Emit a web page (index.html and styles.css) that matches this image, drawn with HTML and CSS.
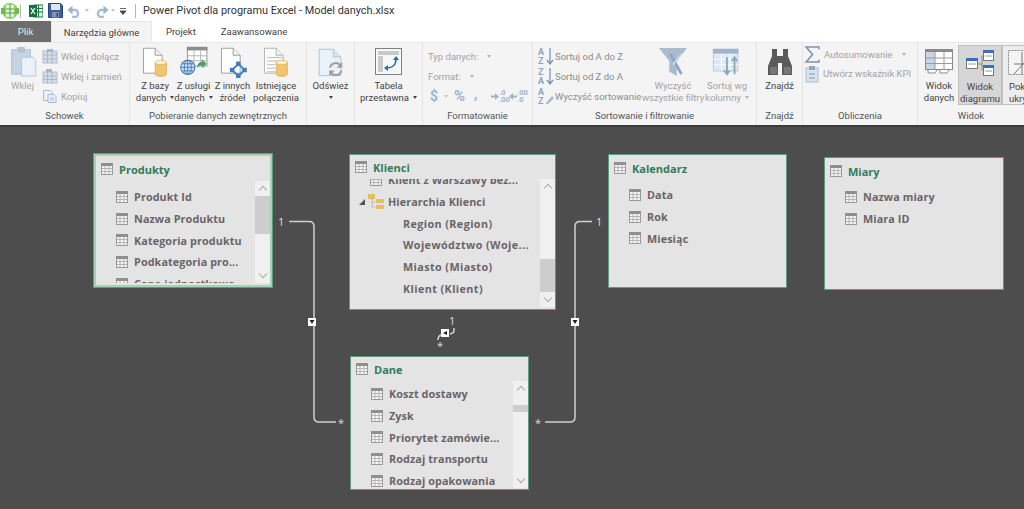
FILE: index.html
```html
<!DOCTYPE html>
<html lang="pl">
<head>
<meta charset="utf-8">
<title>Power Pivot dla programu Excel - Model danych.xlsx</title>
<link rel="stylesheet" href="styles.css">
</head>
<body>
<svg class="defs" width="0" height="0">
  <symbol id="tbl" viewBox="0 0 12 12">
    <rect x=".5" y=".5" width="11" height="11" fill="#f4f4f4" stroke="#9a9a9a"/>
    <rect x="0" y="0" width="12" height="3" fill="#8f8f8f"/>
    <path d="M4 3v8M8 3v8M1 5.5h10M1 8.5h10" stroke="#b4b4b4" fill="none"/>
  </symbol>
  <symbol id="page" viewBox="0 0 32 36">
    <path d="M3.5 1.5h15l9 9v23h-24z" fill="#fff" stroke="#8a8a8a"/>
    <path d="M18.5 1.5v9h9" fill="#f2f2f2" stroke="#8a8a8a"/>
  </symbol>
  <symbol id="cyl" viewBox="0 0 14 18">
    <path d="M1 3v12c0 3.5 12 3.500 12 0V3z" fill="#f1c46f" stroke="#d9a648" stroke-width=".6"/>
    <ellipse cx="7" cy="3" rx="6" ry="2.400" fill="#fbeecb" stroke="#d9a648" stroke-width=".6"/>
  </symbol>
  <symbol id="arr-r" viewBox="0 0 8 7"><path d="M0 2.500h4V0l4 3.500L4 7V4.500H0z" fill="#9fb4ca"/></symbol>
  <symbol id="arr-l" viewBox="0 0 8 7"><path d="M8 2.500H4V0L0 3.500 4 7V4.500h4z" fill="#9fb4ca"/></symbol>
</svg>

<header class="titlebar">
  <svg class="tb-logo" width="18" height="18" viewBox="0 0 18 18"><circle cx="9" cy="9" r="8" fill="#8ccf6c"/><rect x="5" y="3" width="8" height="12" fill="#e6f5da"/><path d="M5 7h8M5 11h8M9 3v12" stroke="#4f9e3d"/><rect x="0" y="6" width="4" height="6" fill="#6dbb4c"/><rect x="14" y="6" width="4" height="6" fill="#6dbb4c"/></svg>
  <span class="tb-sep"></span>
  <svg class="tb-excel" width="14" height="14" viewBox="0 0 14 14"><rect x="5" y="1" width="9" height="12" fill="#dfeee6" stroke="#1f7a45"/><path d="M5 4.500h9M5 8h9M9.500 1v12" stroke="#1f7a45"/><rect y="1" width="8" height="12" fill="#17703c"/><path d="M2 4l4 6M6 4l-4 6" stroke="#fff" stroke-width="1.200"/></svg>
  <svg class="tb-save" width="15" height="15" viewBox="0 0 15 15"><path d="M.5.5h12l2 2v12H.5z" fill="#3e5f9f" stroke="#2c4577"/><rect x="3" y="1" width="9" height="6" fill="#dfe6f2"/><rect x="4" y="9" width="7" height="5.500" fill="#8593ad"/><rect x="8.500" y="10" width="1.500" height="3.500" fill="#30476f"/></svg>
  <svg class="tb-undo" width="15" height="14" viewBox="0 0 15 14"><path d="M3 6h6a4 4 0 0 1 0 7H5" fill="none" stroke="#a9bdd6" stroke-width="2.500"/><path d="M5.500 1.500v9L.5 6z" fill="#9db3cf"/></svg>
  <span class="caret tb-c1"></span>
  <svg class="tb-redo" width="15" height="14" viewBox="0 0 15 14"><path d="M12 6H6a4 4 0 0 0 0 7h4" fill="none" stroke="#a9bdd6" stroke-width="2.500"/><path d="M9.500 1.500v9l5-4.500z" fill="#9db3cf"/></svg>
  <span class="caret tb-c2"></span>
  <svg class="tb-more" width="8" height="8" viewBox="0 0 8 8"><path d="M1 1.500h6M1 4h6L4 7.500z" fill="#444" stroke="#444" stroke-width=".8"/></svg>
  <span class="tb-sep tb-sep2"></span>
  <span class="tb-title">Power Pivot dla programu Excel - Model danych.xlsx</span>
</header>

<nav class="tabs">
  <span class="tab tab-file">Plik</span>
  <span class="tab tab-active">Narzędzia główne</span>
  <span class="tab tab-p">Projekt</span>
  <span class="tab tab-z">Zaawansowane</span>
</nav>

<section class="ribbon">
  <div class="group g-schowek">
    <div class="group-body">
      <div class="big dis w-wklej">
        <svg width="30" height="32" viewBox="0 0 30 34"><rect x="3" y="4" width="20" height="26" fill="#c5d3e2" stroke="#aebdd0"/><rect x="9" y="1" width="8" height="6" fill="#b4c2d3"/><path d="M13.500 12h12l3 3v17h-15z" fill="#eaf1f8" stroke="#b3c4d8"/></svg>
        <span>Wklej</span>
      </div>
      <div class="smalls">
        <div class="small dis"><svg width="16" height="16" viewBox="0 0 16 16"><rect x="1" y="3" width="14" height="12" fill="#d5dee8" stroke="#b3bfcd"/><path d="M1 7h14M1 11h14M5.500 3v12M10 3v12" stroke="#aab8c8"/><rect x="5" y="1" width="6" height="3" fill="#a9b7c7"/></svg>Wklej i dołącz</div>
        <div class="small dis"><svg width="16" height="16" viewBox="0 0 16 16"><rect x="1" y="4" width="14" height="11" fill="#d5dee8" stroke="#b3bfcd"/><path d="M1 8h14M1 11.500h14M5.500 4v11M10 4v11" stroke="#aab8c8"/><rect x="4" y="1" width="6" height="3" fill="#a9b7c7"/></svg>Wklej i zamień</div>
        <div class="small dis"><svg width="16" height="16" viewBox="0 0 16 16"><path d="M1.500 2.500h7l2 2v8h-9z" fill="#eaf1f8" stroke="#a9bbd0"/><path d="M6 6.500h6l2 2v6H6z" fill="#eaf1f8" stroke="#a9bbd0"/><path d="M8 10h4M8 12h4" stroke="#a9bbd0"/></svg>Kopiuj</div>
      </div>
    </div>
    <div class="group-label">Schowek</div>
  </div>

  <div class="group g-pobieranie">
    <div class="group-body">
      <div class="big w-38">
        <svg width="30" height="32" viewBox="0 0 32 36"><use href="#page" width="28" height="32" y="1"/><use href="#cyl" x="15" y="15" width="15" height="20"/></svg>
        <span>Z bazy<br>danych<i class="caret in"></i></span>
      </div>
      <div class="big w-40">
        <svg width="34" height="32" viewBox="0 0 34 36"><rect x="9.500" y="1.500" width="22" height="21" fill="#fff" stroke="#8a8a8a"/><rect x="9" y="1" width="23" height="4" fill="#8d8d8d"/><path d="M17 5v17M24.500 5v17M10 11h21M10 16.500h21" stroke="#aaa"/><circle cx="10" cy="24" r="8" fill="#cfe0f2" stroke="#3f78b8" stroke-width="1.200"/><path d="M2 24h16M10 16v16M4 20h12M4 28h12" stroke="#3f78b8" fill="none"/><ellipse cx="10" cy="24" rx="4" ry="8" fill="none" stroke="#3f78b8"/><path d="M21 25v-4a4 4 0 0 1 4-3h1v-3l5 5-5 5v-3h-1c-2 0-3 1-4 3z" fill="#4aa06c"/></svg>
        <span>Z usługi<br>danych<i class="caret in"></i></span>
      </div>
      <div class="big w-40">
        <svg width="30" height="32" viewBox="0 0 32 36"><use href="#page" width="28" height="32" y="1"/><path d="M22 20l7 7-7 7-7-7z" fill="none" stroke="#3f7cc0" stroke-width="2"/><rect x="19.500" y="17.500" width="5" height="5" fill="#3f7cc0"/><rect x="12.500" y="24.500" width="5" height="5" fill="#3f7cc0"/><rect x="26.500" y="24.500" width="5" height="5" fill="#3f7cc0"/><rect x="19.500" y="31" width="5" height="5" fill="#3f7cc0"/></svg>
        <span>Z innych<br>źródeł</span>
      </div>
      <div class="big w-46">
        <svg width="30" height="32" viewBox="0 0 32 36"><use href="#page" width="28" height="32" y="1" opacity=".75"/><path d="M6 13h17M6 17h17M6 21h9M6 25h9M6 29h9" stroke="#b5b5b5"/><use href="#cyl" x="15" y="15" width="15" height="20"/></svg>
        <span>Istniejące<br>połączenia</span>
      </div>
    </div>
    <div class="group-label">Pobieranie danych zewnętrznych</div>
  </div>

  <div class="group g-odswiez">
    <div class="group-body">
      <div class="big w-full">
        <svg width="30" height="32" viewBox="0 0 30 34"><path d="M2.500 3.500h15l8 8v20h-23z" fill="#eaf1f8" stroke="#a9c2dc"/><path d="M17.500 3.500v8h8" fill="#d7e3ef" stroke="#a9c2dc"/><path d="M14 23a6 6 0 0 1 11-2M26 26a6 6 0 0 1-11 2" fill="none" stroke="#9e9e9e" stroke-width="2.200"/><path d="M27 17v6h-6zM13 32v-6h6z" fill="#9e9e9e"/></svg>
        <span>Odśwież<br><i class="caret in solo"></i></span>
      </div>
    </div>
    <div class="group-label">&nbsp;</div>
  </div>

  <div class="group g-tabela">
    <div class="group-body">
      <div class="big w-full">
        <svg width="28" height="32" viewBox="0 0 28 28"><rect x=".5" y=".5" width="26" height="26" fill="#f8f8f8" stroke="#808080"/><rect x="3" y="3" width="21" height="4" fill="#c9c9c9"/><rect x="3" y="8" width="5" height="16" fill="#c9c9c9"/><path d="M12 20c5 0 9-3 9-9" fill="none" stroke="#1f6fb8" stroke-width="1.600"/><path d="M18 12l3-4 3 4zM13 17l-4 3 4 3z" fill="#1f6fb8"/></svg>
        <span>Tabela<br>przestawna<i class="caret in"></i></span>
      </div>
    </div>
    <div class="group-label">&nbsp;</div>
  </div>

  <div class="group g-format">
    <div class="group-body col">
      <div class="small dis plain">Typ danych:<i class="caret in light"></i></div>
      <div class="small dis plain">Format:<i class="caret in light"></i></div>
      <div class="small dis fmt">
        <b class="sym s-dollar">$</b><i class="caret light"></i><b class="sym s-pct">%</b><b class="sym s-comma">,</b>
        <span class="s-dec"><svg width="8" height="7"><use href="#arr-r"/></svg><b>.0<br>.00</b></span>
        <span class="s-dec"><svg width="8" height="7"><use href="#arr-l"/></svg><b>.00<br>.0</b></span>
      </div>
    </div>
    <div class="group-label">Formatowanie</div>
  </div>

  <div class="group g-sort">
    <div class="group-body">
      <div class="smalls wide">
        <div class="small sort-dis"><svg width="16" height="18" viewBox="0 0 16 18"><text x="0" y="8" class="az">A</text><text x="0" y="17" class="za">Z</text><path d="M12 1v15M9 13l3 4 3-4" fill="none" stroke="#7d94b1" stroke-width="1.300"/></svg>Sortuj od A do Z</div>
        <div class="small sort-dis"><svg width="16" height="18" viewBox="0 0 16 18"><text x="0" y="8" class="za">Z</text><text x="0" y="17" class="az">A</text><path d="M12 1v15M9 13l3 4 3-4" fill="none" stroke="#7d94b1" stroke-width="1.300"/></svg>Sortuj od Z do A</div>
        <div class="small sort-dis"><svg width="16" height="18" viewBox="0 0 16 18"><text x="0" y="8" class="az">A</text><text x="0" y="17" class="za">Z</text><path d="M8 16l6-7 2 2-6 6H8z" fill="#a9b9ca"/></svg>Wyczyść sortowanie</div>
      </div>
      <div class="big dis w-fil">
        <svg width="30" height="32" viewBox="0 0 32 34"><path d="M1 2h30L20 16v16l-8-5V16z" fill="#a9bbcf"/><path d="M13 8l12 22" stroke="#8ea6c0" stroke-width="3"/><path d="M25 8l-9 12" stroke="#c8d5e2" stroke-width="2"/></svg>
        <span>Wyczyść<br>wszystkie filtry</span>
      </div>
      <div class="big dis w-sortk">
        <svg width="30" height="32" viewBox="0 0 30 34"><rect x=".5" y="3.500" width="26" height="23" fill="#dde8f3" stroke="#b7c8da"/><rect y="3" width="27" height="5" fill="#9fb3c9"/><path d="M9 8v18M18 8v18M1 14h26M1 20h26" stroke="#fff"/><path d="M15 12v17M12 26l3 4 3-4M23 30V13M20 16l3-4 3 4" fill="none" stroke="#8ea6c0" stroke-width="2"/></svg>
        <span>Sortuj wg<br>kolumny<i class="caret in light"></i></span>
      </div>
    </div>
    <div class="group-label">Sortowanie i filtrowanie</div>
  </div>

  <div class="group g-znajdz">
    <div class="group-body">
      <div class="big w-full">
        <svg width="26" height="32" viewBox="0 0 26 30"><path d="M5 2h5v7h6V2h5v7l4 10v9h-10V16h-4v12H1v-9l4-10z" fill="#5b5b5b"/><path d="M3 20h7v7H3zM17 20h7v7h-7z" fill="#777"/></svg>
        <span class="dark">Znajdź</span>
      </div>
    </div>
    <div class="group-label">Znajdź</div>
  </div>

  <div class="group g-oblicz">
    <div class="group-body col calc">
      <div class="small dis"><svg class="sig" width="16" height="16" viewBox="0 0 16 16"><path d="M14 3V1H2l6 7-6 7h12v-2" fill="none" stroke="#7d94b1" stroke-width="1.500"/></svg>Autosumowanie<i class="caret in light"></i></div>
      <div class="small dis"><svg width="16" height="18" viewBox="0 0 16 18"><rect x="2" y="3" width="12" height="14" fill="#d9e4ef" stroke="#a9bbd0"/><rect x="5" y="1" width="6" height="4" fill="#93a9c2"/><path d="M5 9h6M5 13h6" stroke="#7d94b1"/></svg>Utwórz wskaźnik KPI</div>
    </div>
    <div class="group-label">Obliczenia</div>
  </div>

  <div class="group g-widok">
    <div class="group-body views">
      <div class="big w-dane">
        <svg width="28" height="32" viewBox="0 0 28 26"><rect x=".5" y=".5" width="27" height="20" fill="#fff" stroke="#8a8a8a"/><rect x="0" y="0" width="28" height="3" fill="#8a8a8a"/><rect x="1" y="3" width="9" height="17" fill="#c5d6e8"/><path d="M10 3v17M19 3v17M1 9h26M1 14.500h26" stroke="#9a9a9a"/><path d="M3 21v3h7l2-3M15 21v3h7l2-3" fill="#fff" stroke="#8a8a8a"/></svg>
        <span class="dark">Widok<br>danych</span>
      </div>
      <div class="big w-diag selected">
        <svg width="28" height="32" viewBox="0 0 28 26"><path d="M12 14h4V6h2M19 20h-3v-6" fill="none" stroke="#8a8a8a"/><rect x="17.500" y=".5" width="10" height="10" fill="#fff" stroke="#777"/><rect x="17" y="0" width="11" height="3" fill="#3d6fb4"/><rect x=".5" y="8.500" width="11" height="10" fill="#fff" stroke="#777"/><rect x="0" y="8" width="12" height="3" fill="#3d6fb4"/><rect x="17.500" y="15.500" width="10" height="10" fill="#fff" stroke="#777"/><rect x="17" y="15" width="11" height="3" fill="#3d6fb4"/><path d="M2 14h8M19 6h7M19 21h7" stroke="#999"/></svg>
        <span class="dark">Widok<br>diagramu</span>
      </div>
      <div class="big w-pok bordered">
        <svg width="28" height="32" viewBox="0 0 28 26"><rect x=".5" y=".5" width="27" height="24" fill="#f4f4f4" stroke="#8a8a8a" stroke-dasharray="2 1"/><path d="M6 24L26 2M6 14h20M14 2v22" stroke="#777" fill="none"/></svg>
        <span class="dark">Pokaż<br>ukryte</span>
      </div>
    </div>
    <div class="group-label">Widok</div>
  </div>
</section>

<main class="canvas">
  <svg class="links" width="1024" height="384" viewBox="0 125 1024 384">
    <g fill="none" stroke="#d0d0d0" stroke-width="1.500">
      <path d="M289 221.500h20q5 0 5 5V417q0 5 5 5h17"/>
      <path d="M592 221.500h-12q-5 0-5 5V417q0 5-5 5h-25"/>
      <path d="M454 328v3q0 2-4 3M441 335q-3 1-3 5v0"/>
    </g>
    <g class="marker">
      <rect x="308" y="318" width="8" height="8" fill="#fff"/><path d="M309.500 320h5l-2.500 4z" fill="#222"/>
      <rect x="571" y="318" width="8" height="8" fill="#fff"/><path d="M572.500 320h5l-2.500 4z" fill="#222"/>
      <rect x="441" y="329" width="8" height="8" fill="#fff"/><path d="M447 331v4l-4-2z" fill="#222"/>
    </g>
    <text x="278" y="226" class="lnk">1</text>
    <text x="596" y="226" class="lnk">1</text>
    <text x="449" y="325" class="lnk">1</text>
    <text x="338" y="427" class="lnk">*</text>
    <text x="535" y="427" class="lnk">*</text>
    <text x="437" y="350" class="lnk">*</text>
  </svg>

  <article class="card selected-card c-produkty">
    <h2><svg width="12" height="12"><use href="#tbl"/></svg>Produkty</h2>
    <div class="card-body">
      <ul class="fields">
        <li><svg width="12" height="12"><use href="#tbl"/></svg>Produkt Id</li>
        <li><svg width="12" height="12"><use href="#tbl"/></svg>Nazwa Produktu</li>
        <li><svg width="12" height="12"><use href="#tbl"/></svg>Kategoria produktu</li>
        <li><svg width="12" height="12"><use href="#tbl"/></svg>Podkategoria pro...</li>
        <li><svg width="12" height="12"><use href="#tbl"/></svg>Cena jednostkowa</li>
      </ul>
      <div class="scroll"><span class="up"></span><span class="track"><span class="thumb th-p"></span></span><span class="down"></span></div>
    </div>
  </article>

  <article class="card c-klienci">
    <h2><svg width="12" height="12"><use href="#tbl"/></svg>Klienci</h2>
    <div class="card-body">
      <ul class="fields scrolled">
        <li><svg width="12" height="12"><use href="#tbl"/></svg>Klient z Warszawy bez...</li>
        <li class="hier"><i class="tri"></i><svg width="16" height="16" viewBox="0 0 16 16"><rect x="0" y="0" width="7" height="5" fill="#e7bd62"/><path d="M4 5v8h4M4 8h4" stroke="#999" fill="none" stroke-dasharray="1 1"/><rect x="8" y="5" width="8" height="4" fill="#e7bd62"/><rect x="8" y="11" width="8" height="4" fill="#e7bd62"/></svg>Hierarchia Klienci</li>
        <li class="sub">Region (Region)</li>
        <li class="sub">Województwo (Woje...</li>
        <li class="sub">Miasto (Miasto)</li>
        <li class="sub">Klient (Klient)</li>
      </ul>
      <div class="scroll"><span class="up"></span><span class="track"><span class="thumb th-k"></span></span><span class="down"></span></div>
    </div>
  </article>

  <article class="card c-kalendarz">
    <h2><svg width="12" height="12"><use href="#tbl"/></svg>Kalendarz</h2>
    <ul class="fields">
      <li><svg width="12" height="12"><use href="#tbl"/></svg>Data</li>
      <li><svg width="12" height="12"><use href="#tbl"/></svg>Rok</li>
      <li><svg width="12" height="12"><use href="#tbl"/></svg>Miesiąc</li>
    </ul>
  </article>

  <article class="card c-miary">
    <h2><svg width="12" height="12"><use href="#tbl"/></svg>Miary</h2>
    <ul class="fields">
      <li><svg width="12" height="12"><use href="#tbl"/></svg>Nazwa miary</li>
      <li><svg width="12" height="12"><use href="#tbl"/></svg>Miara ID</li>
    </ul>
  </article>

  <article class="card c-dane">
    <h2><svg width="12" height="12"><use href="#tbl"/></svg>Dane</h2>
    <div class="card-body">
      <ul class="fields">
        <li><svg width="12" height="12"><use href="#tbl"/></svg>Koszt dostawy</li>
        <li><svg width="12" height="12"><use href="#tbl"/></svg>Zysk</li>
        <li><svg width="12" height="12"><use href="#tbl"/></svg>Priorytet zamówie...</li>
        <li><svg width="12" height="12"><use href="#tbl"/></svg>Rodzaj transportu</li>
        <li><svg width="12" height="12"><use href="#tbl"/></svg>Rodzaj opakowania</li>
      </ul>
      <div class="scroll"><span class="up"></span><span class="track"><span class="thumb th-d"></span></span><span class="down"></span></div>
    </div>
  </article>
</main>
</body>
</html>
```

FILE: styles.css
```css
* { box-sizing: border-box; }
html, body { margin: 0; height: 100%; }
body {
  width: 1024px; height: 509px; overflow: hidden;
  display: flex; flex-direction: column;
  font-family: Roboto, "Open Sans", "Liberation Sans", sans-serif;
  font-size: 9.500px; color: #444; background: #fff;
}
.defs { position: absolute; }
svg { display: block; flex: none; }

/* title bar */
.titlebar { height: 21px; display: flex; align-items: center; flex: none; background: #fff; }
.tb-logo { margin-left: 1px; }
.tb-sep { width: 1px; height: 14px; background: #b5b5b5; margin-left: 1px; }
.tb-excel { margin-left: 8px; }
.tb-save { margin-left: 5px; }
.tb-undo { margin-left: 4px; }
.tb-c1 { margin-left: 3px; }
.tb-redo { margin-left: 5px; }
.tb-c2 { margin-left: 2px; }
.tb-more { margin-left: 4px; }
.tb-sep2 { margin-left: 8px; }
.tb-title { margin-left: 7px; font-size: 10.900px; color: #333; white-space: nowrap; }
.caret { display: inline-block; width: 0; height: 0; border: 2.500px solid transparent; border-top: 3px solid #c4c4c4; border-bottom: 0; }
.caret.in { border-top-color: #444; margin-left: 4px; vertical-align: 2px; }
.caret.in.light { border-top-color: #b5b5b5; }
.caret.solo { margin-left: 0; }

/* tabs */
.tabs { height: 21px; display: flex; flex: none; background: #fff; }
.tab { display: flex; align-items: center; justify-content: center; height: 21px; color: #444; }
.tab-file { width: 51px; background: #6d6d6d; color: #e8e8e8; }
.tab-active { width: 101px; background: #f4f4f4; border: 1px solid #e6e6e6; border-bottom: 0; }
.tab-p { margin-left: 14px; }
.tab-z { margin-left: 25px; }

/* ribbon */
.ribbon { height: 83px; flex: none; display: flex; background: #f4f4f4; border-top: 1px solid #e8e8e8; overflow: hidden; }
.group { flex: none; display: flex; flex-direction: column; border-right: 1px solid #e2e2e2; }
.group-body { flex: 1; display: flex; min-height: 0; padding-top: 3px; }
.group-body.col { flex-direction: column; }
.group-label { height: 17px; flex: none; text-align: center; color: #555; white-space: nowrap; padding-top: 2px; }
.g-schowek { width: 130px; }
.g-pobieranie { width: 177px; }
.g-odswiez { width: 48px; }
.g-tabela { width: 68px; }
.g-format { width: 110px; }
.g-sort { width: 224px; }
.g-znajdz { width: 46px; }
.g-oblicz { width: 115px; }
.g-widok { width: 106px; border-right: 0; }

.big { display: flex; flex-direction: column; align-items: center; text-align: center; line-height: 12px; white-space: nowrap; height: 60px; flex: none; }
.big svg { margin-bottom: 2px; }
.big span { color: #444; }
.big.dis span, .small.dis { color: #a3a3a3; }
.small.sort-dis { color: #8c8c8c; gap: 1px; }
.w-wklej { width: 39px; margin-left: 3px; }
.w-38 { width: 38px; margin-left: 6px; }
.w-40 { width: 39px; }
.w-46 { width: 46px; margin-left: 1px; }
.w-full { flex: 1; }
.w-fil { width: 60px; }
.w-sortk { width: 40px; margin-left: 4px; }
.w-dane { width: 38px; margin-left: 2px; }
.w-diag { width: 44px; }
.w-pok { width: 40px; }
.group-body.views { padding-top: 2px; }
.views .big { padding-top: 1px; }
.selected { background: #d6d6d6; border: 1px solid #c0c0c0; }
.bordered { border: 1px solid #c0c0c0; background: #ececec; }

.smalls { display: flex; flex-direction: column; }
.small { height: 20px; display: flex; align-items: center; gap: 3px; white-space: nowrap; }
.small .caret.in { margin-left: 6px; vertical-align: 0; }
.plain { margin-left: 5px; }
.g-format .group-body { padding-top: 3px; }
.fmt { gap: 0; margin-left: 7px; }
.fmt .caret { margin-left: 3px; }
.sym { font-weight: 700; color: #9fb4ca; display: block; }
.s-dollar { font-size: 14px; width: 11px; }
.s-pct { font-size: 15px; margin-left: 6px; width: 20px; }
.s-comma { font-size: 14px; width: 17px; padding-bottom: 5px; }
.s-dec { display: flex; align-items: center; width: 18px; }
.s-dec b { font-size: 7.500px; line-height: 7px; color: #9fb4ca; }
.az, .za { font: 700 9px Roboto, sans-serif; fill: #8ea6c0; }
.wide { margin-left: 5px; width: 105px; }
.calc { padding-left: 1px; padding-top: 2px; }
.calc .small { height: 19px; }
.sig { width: 17px; height: 17px; }

/* canvas */
.canvas { position: relative; flex: 1; background: #4d4d4d; border-top: 2px solid #3a3a3a; overflow: hidden; }
.links { position: absolute; left: 0; top: -2px; }
.lnk { font: 11px "Open Sans", sans-serif; fill: #dedede; }

.card { position: absolute; background: #e4e4e4; border: 1px solid #5f9a7c; display: flex; flex-direction: column; overflow: hidden; font-family: "Open Sans", sans-serif; }
.selected-card { border: 3px solid #a4d3b6; outline: 1px solid #5f9a7c; outline-offset: -1px; }
.card h2 { margin: 0; flex: none; display: flex; align-items: center; gap: 6px; height: 26px; padding-left: 5px; font-size: 11px; font-weight: 700; color: #2f7d5a; }
.card-body { flex: 1; display: flex; min-height: 0; }
.fields { list-style: none; margin: 0; padding: 0 0 0 20px; flex: 1; min-width: 0; overflow: hidden; color: #6a6468; font-size: 10.800px; font-weight: 700; letter-spacing: .1px; }
.fields li { height: 21.700px; flex: none; display: flex; align-items: center; gap: 6px; white-space: nowrap; }
.scrolled li:first-child { margin-top: -10px; }
.hier { margin-left: -11px; gap: 1px !important; }
.hier svg { margin-right: 3px; }
.tri { width: 0; height: 0; border-style: solid; border-width: 0 0 6px 6px; border-color: transparent transparent #555 transparent; margin-right: 2px; }
.fields .sub { padding-left: 33px; letter-spacing: .4px; }
.scroll { width: 15px; flex: none; background: #f0f0f0; display: flex; flex-direction: column; align-items: center; }
.up, .down { width: 6px; height: 6px; flex: none; border-left: 1px solid #aaa; border-top: 1px solid #aaa; margin: 6px 0 2px; transform: rotate(45deg); }
.down { transform: rotate(225deg); margin: 2px 0 6px; }
.track { flex: 1; width: 100%; display: flex; flex-direction: column; }
.thumb { display: block; width: 100%; background: #cdcdcd; }
.th-p { margin-top: 1px; height: 38px; }
.th-k { margin-top: 66px; height: 33px; }
.th-d { margin-top: 10px; height: 7px; }

.c-produkty { left: 93px; top: 26px; width: 180px; height: 135px; }
.c-produkty h2 { height: 25px; padding-top: 1px; }
.c-produkty .card-body { padding-bottom: 2px; }
.c-produkty .fields { padding-top: 5px; }
.c-klienci { left: 349px; top: 27px; width: 207px; height: 156px; }
.c-klienci h2 { height: 24px; }
.c-klienci .card-body { padding-bottom: 2px; }
.c-kalendarz { left: 608px; top: 27px; width: 179px; height: 134px; }
.c-kalendarz .fields { padding-top: 3px; }
.c-miary { left: 824px; top: 30px; width: 180px; height: 133px; }
.c-miary .fields { padding-top: 2px; }
.c-dane { left: 350px; top: 229px; width: 179px; height: 134px; }
.c-dane h2 { height: 24px; }
.c-dane .card-body { padding-bottom: 1px; }
.c-dane .fields { padding-top: 2px; }
.c-kalendarz .fields, .c-miary .fields { flex: 1; }
```
